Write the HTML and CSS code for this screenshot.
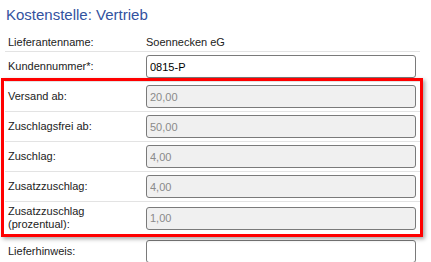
FILE: index.html
```html
<!DOCTYPE html>
<html lang="de">
<head>
    <meta charset="UTF-8">
    <meta name="viewport" content="width=device-width, initial-scale=1.0">
    <title>Kostenstelle</title>
    <link rel="stylesheet" href="styles.css">
</head>
<body>

<h2 class="cost-title">Kostenstelle: Vertrieb</h2>

<div class="cost-form">
    <div class="form-row text-row">
        <div class="form-label">Lieferantenname:</div>
        <div class="form-value">Soennecken eG</div>
    </div>
    <div class="form-row">
        <label class="form-label" for="kundennummer">Kundennummer*:</label>
        <div class="form-value"><input type="text" id="kundennummer" value="0815-P"></div>
    </div>

    <!-- highlighted block -->
    <div class="form-group marked">
        <div class="form-row">
            <label class="form-label" for="versandAb">Versand ab:</label>
            <div class="form-value"><input type="text" id="versandAb" value="20,00" disabled></div>
        </div>
        <div class="form-row">
            <label class="form-label" for="zuschlagsfrei">Zuschlagsfrei ab:</label>
            <div class="form-value"><input type="text" id="zuschlagsfrei" value="50,00" disabled></div>
        </div>
        <div class="form-row">
            <label class="form-label" for="zuschlag">Zuschlag:</label>
            <div class="form-value"><input type="text" id="zuschlag" value="4,00" disabled></div>
        </div>
        <div class="form-row">
            <label class="form-label" for="zusatzzuschlag">Zusatzzuschlag:</label>
            <div class="form-value"><input type="text" id="zusatzzuschlag" value="4,00" disabled></div>
        </div>
        <div class="form-row last">
            <label class="form-label" for="zusatzProzent">Zusatzzuschlag<br>(prozentual):</label>
            <div class="form-value"><input type="text" id="zusatzProzent" value="1,00" disabled></div>
        </div>
    </div>

    <div class="form-row hint-row">
        <label class="form-label" for="lieferhinweis">Lieferhinweis:</label>
        <div class="form-value"><input type="text" id="lieferhinweis" value=""></div>
    </div>
</div>

</body>
</html>
```

FILE: styles.css
```css
body {
    font-family: "Liberation Sans", Arial, sans-serif;
    font-size: 11px;
    margin: 0;
    background-color: #fff;
    color: #222;
}
.cost-title {
    margin: 0;
    padding: 6px 0 0 6px;
    font-size: 15px;
    font-weight: normal;
    line-height: 18px;
    color: #3352a0;
}
.cost-form {
    margin: 9px 11px 0 5px;
}
.form-row {
    display: grid;
    grid-template-columns: 141px 1fr;
    align-items: center;
    padding: 3px 0;
    border-bottom: 1px solid #e3e3e3;
    line-height: 13px;
}
.text-row {
    padding: 3px 0 2px;
}
.form-row.last {
    border-bottom: none;
}
.form-label {
    padding-left: 3px;
}
.form-value {
    padding-right: 4px;
}
.form-value input {
    display: block;
    width: 100%;
    height: 23px;
    box-sizing: border-box;
    margin: 0;
    padding: 0 3px;
    border: 1px solid #7a7a7a;
    border-radius: 3px;
    font-family: "Liberation Sans", Arial, sans-serif;
    font-size: 11px;
    color: #000;
    background-color: #fff;
}
.form-value input:disabled {
    color: #8a8a8a;
    background-color: #f0f0f0;
}
.form-group {
    position: relative;
}
.marked::after {
    content: "";
    position: absolute;
    top: -4px;
    left: -4px;
    right: -3px;
    bottom: -3px;
    border: 3px solid #f00;
    box-shadow: 2px 2px 4px rgba(0, 0, 0, 0.35);
    pointer-events: none;
}
.hint-row {
    margin-top: 3px;
    border-bottom: none;
}
```
